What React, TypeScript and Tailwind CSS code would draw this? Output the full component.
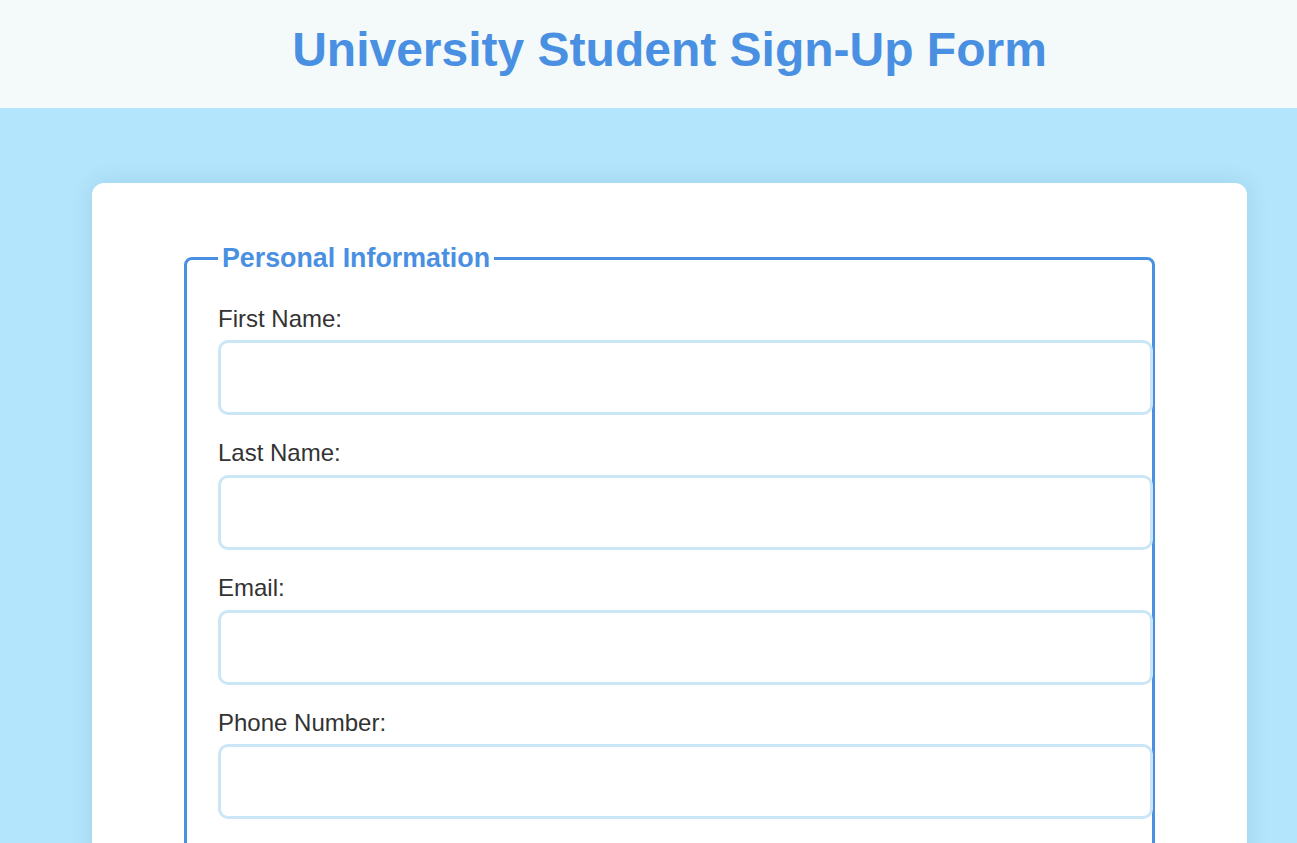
import { useState } from 'react';

const fields = [
  { id: 'firstName', label: 'First Name:', type: 'text' },
  { id: 'lastName', label: 'Last Name:', type: 'text' },
  { id: 'email', label: 'Email:', type: 'email' },
  { id: 'phone', label: 'Phone Number:', type: 'tel' },
];

export default function App() {
  const [values, setValues] = useState<Record<string, string>>({});

  return (
    <div className="min-h-screen bg-[#b3e5fc] font-['Liberation_Sans',Arial,sans-serif] text-[#333]">
      {/* Header */}
      <header className="h-[108px] bg-[#f4f9fa] pt-[22px] pl-[42px] text-center">
        <h1 className="text-[48px] font-bold leading-[1.15] text-[#4a90e2]">University Student Sign-Up Form</h1>
      </header>

      <main className="pt-[75px] pb-10">
        <div className="ml-[92px] w-[1155px] rounded-xl bg-white px-[92px] pt-[60px] pb-16 shadow-[0_0_22px_rgba(0,60,110,0.12)]">
          <fieldset className="min-w-0 rounded-lg border-[3px] border-[#4a90e2] pl-[31px] pr-[31px] pt-[31px] pb-8">
            <legend className="px-1 text-[26.8px] font-bold leading-[1.15] text-[#4a90e2]">Personal Information</legend>
            {fields.map((f) => (
              <div key={f.id} className="mb-[24px]">
                <label htmlFor={f.id} className="mb-[8px] block text-[24px] leading-[1.15] text-[#333]">
                  {f.label}
                </label>
                <input
                  id={f.id}
                  type={f.type}
                  value={values[f.id] ?? ''}
                  onChange={(e) => setValues({ ...values, [f.id]: e.target.value })}
                  className="block h-[75px] w-[935px] rounded-[10px] border-[3px] border-[#cbe6f6] bg-white px-4 text-[24px] outline-none"
                />
              </div>
            ))}
          </fieldset>
        </div>
      </main>
    </div>
  );
}
